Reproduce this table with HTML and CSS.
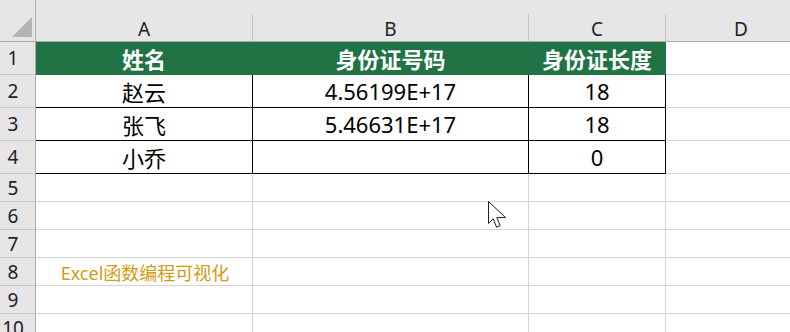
FILE: index.html
```html
<!DOCTYPE html>
<html lang="zh-CN">
<head>
    <meta charset="UTF-8">
    <meta name="viewport" content="width=device-width, initial-scale=1.0">
    <title>身份证长度</title>
    <link rel="stylesheet" href="styles.css">
</head>
<body>
    <div class="strip">
        <div class="strip-left"></div>
        <div class="strip-rest"></div>
    </div>
    <div class="sheet">
        <!-- 列标题 -->
        <div class="corner"><span class="corner-mark"></span></div>
        <div class="col-head">A</div>
        <div class="col-head">B</div>
        <div class="col-head">C</div>
        <div class="col-head">D</div>

        <!-- 第1行: 表头 -->
        <div class="row-head">1</div>
        <div class="cell title">姓名</div>
        <div class="cell title">身份证号码</div>
        <div class="cell title">身份证长度</div>
        <div class="cell"></div>

        <div class="row-head">2</div>
        <div class="cell data">赵云</div>
        <div class="cell data">4.56199E+17</div>
        <div class="cell data">18</div>
        <div class="cell"></div>

        <div class="row-head">3</div>
        <div class="cell data">张飞</div>
        <div class="cell data">5.46631E+17</div>
        <div class="cell data">18</div>
        <div class="cell"></div>

        <div class="row-head">4</div>
        <div class="cell data">小乔</div>
        <div class="cell data"></div>
        <div class="cell data">0</div>
        <div class="cell"></div>

        <div class="row-head">5</div>
        <div class="cell"></div><div class="cell"></div><div class="cell"></div><div class="cell"></div>

        <div class="row-head">6</div>
        <div class="cell"></div><div class="cell"></div><div class="cell"></div><div class="cell"></div>

        <div class="row-head">7</div>
        <div class="cell"></div><div class="cell"></div><div class="cell"></div><div class="cell"></div>

        <div class="row-head">8</div>
        <div class="cell mark">Excel函数编程可视化</div><div class="cell"></div><div class="cell"></div><div class="cell"></div>

        <div class="row-head">9</div>
        <div class="cell"></div><div class="cell"></div><div class="cell"></div><div class="cell"></div>

        <div class="row-head">10</div>
        <div class="cell"></div><div class="cell"></div><div class="cell"></div><div class="cell"></div>
    </div>

    <!-- 鼠标指针 -->
    <svg class="pointer" width="20" height="28" viewBox="0 0 20 28">
        <path d="M0.5 0.5 L0.5 22.5 L5.2 17.8 L8.6 26.2 L12.2 24.6 L8.8 16.6 L17.5 16.6 Z" fill="#fff" stroke="#1d1d2b" stroke-width="1"/>
    </svg>
</body>
</html>
```

FILE: styles.css
```css
* {
    box-sizing: border-box;
}
body {
    margin: 0;
    width: 790px;
    height: 332px;
    overflow: hidden;
    background-color: #fff;
    font-family: "Noto Sans", "Noto Sans CJK SC", sans-serif;
    position: relative;
}
.strip {
    display: flex;
    height: 14px;
    background-color: #e6e6e6;
}
.strip-left {
    width: 36px;
    border-right: 1px solid #ababab;
}
.strip-rest {
    flex: 1;
}
.sheet {
    display: grid;
    grid-template-columns: 36px 217px 276px 137px 151px;
    grid-template-rows: 28px repeat(4, 33px) repeat(6, 28px);
}
.corner {
    background-color: #e6e6e6;
    border-right: 1px solid #ababab;
    border-bottom: 1px solid #ababab;
    position: relative;
}
.corner-mark {
    position: absolute;
    right: 3px;
    bottom: 4px;
    width: 0;
    height: 0;
    border-left: 20px solid transparent;
    border-bottom: 20px solid #b4b4b4;
}
.col-head {
    background-color: #e6e6e6;
    border-right: 1px solid #c6c6c6;
    border-bottom: 1px solid #ababab;
    display: flex;
    align-items: center;
    justify-content: center;
    padding-top: 2px;
    font-size: 19px;
    color: #222;
}
.row-head {
    background-color: #e6e6e6;
    border-right: 1px solid #ababab;
    border-bottom: 1px solid #c6c6c6;
    display: flex;
    align-items: center;
    justify-content: center;
    padding-right: 9px;
    font-size: 19px;
    color: #222;
}
.cell {
    border-right: 1px solid #d4d4d4;
    border-bottom: 1px solid #d4d4d4;
    display: flex;
    align-items: center;
    justify-content: center;
    font-size: 22px;
    color: #000;
}
.title {
    background-color: #217346;
    border-color: #217346;
    color: #fff;
    font-weight: bold;
}
.data {
    border-right-color: #000;
    border-bottom-color: #000;
}
.mark {
    font-size: 18px;
    color: #d39c12;
    padding-left: 2px;
}
.pointer {
    position: absolute;
    left: 488px;
    top: 201px;
}
```
